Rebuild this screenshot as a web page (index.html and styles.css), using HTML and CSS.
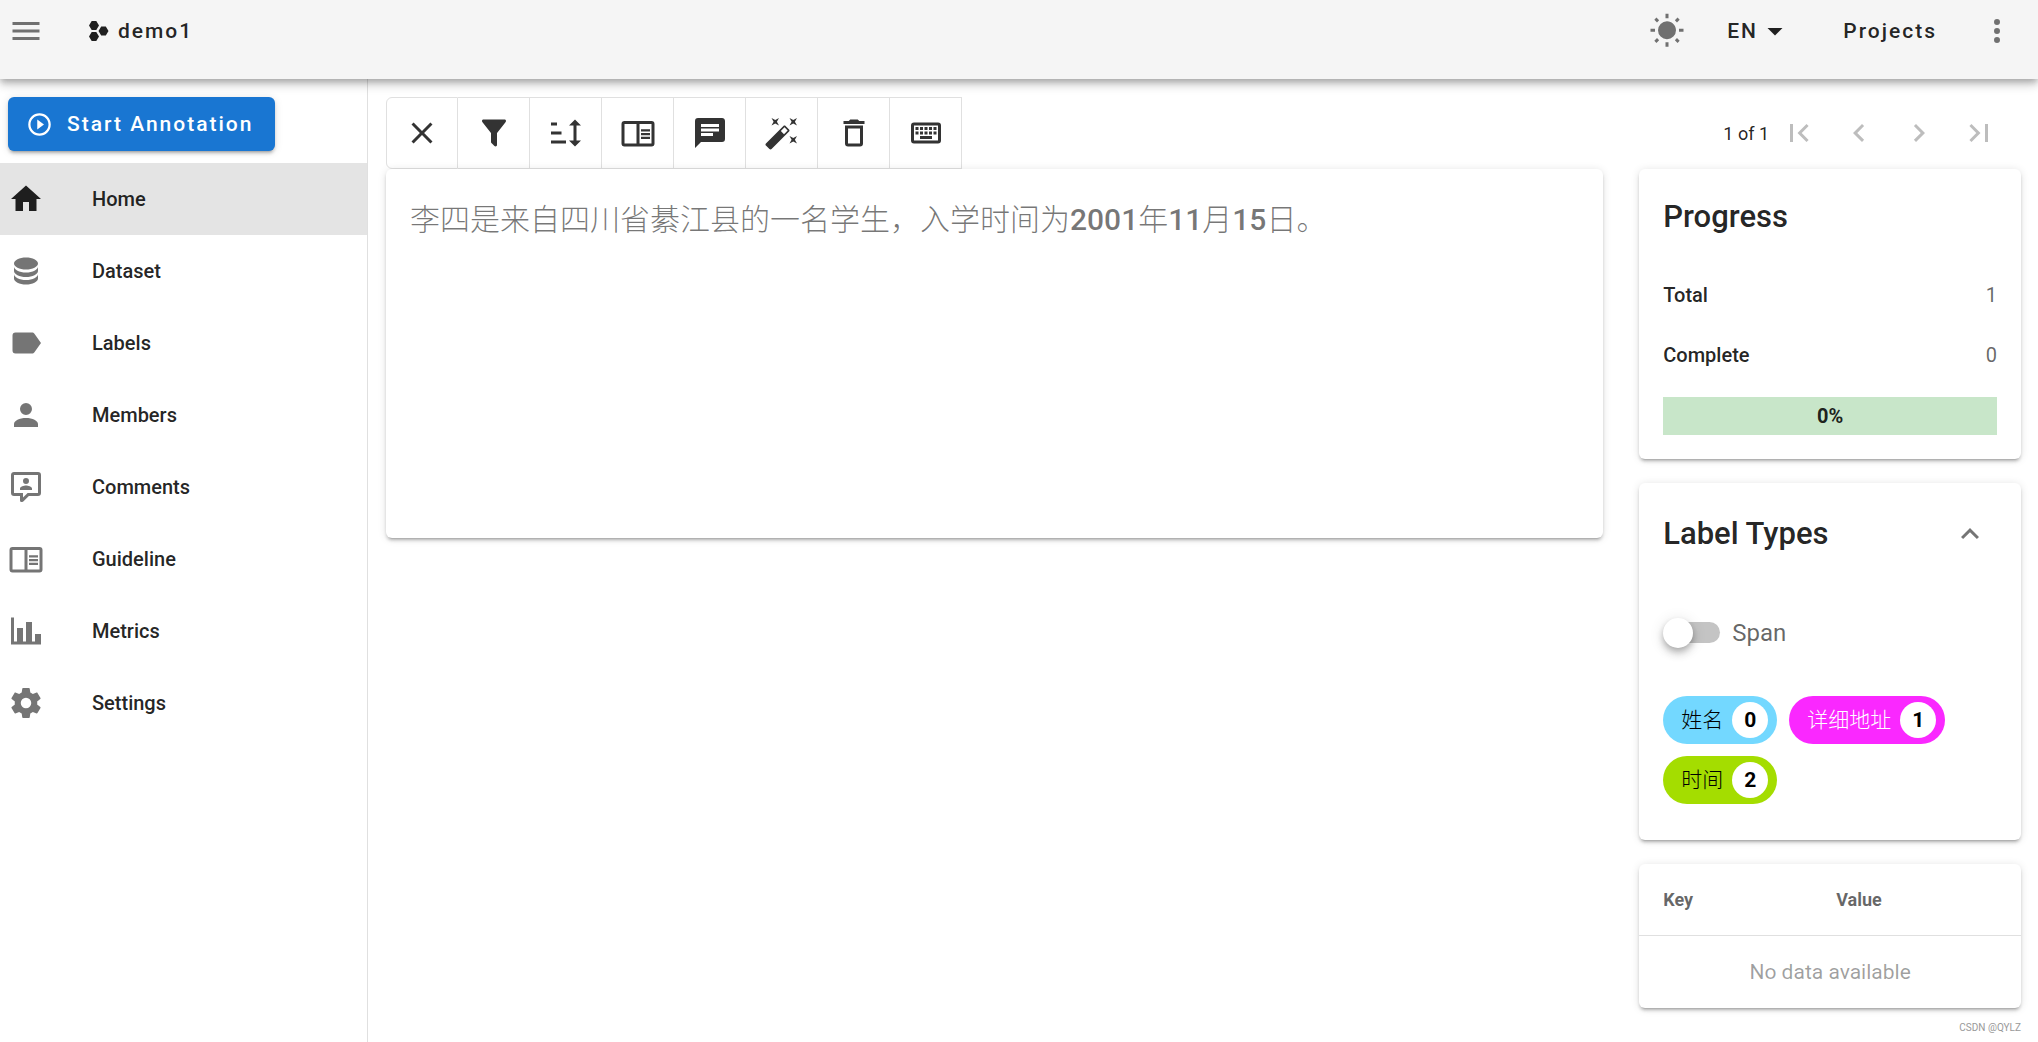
FILE: index.html
```html
<!DOCTYPE html>
<html lang="en">
<head>
    <meta charset="UTF-8">
    <meta name="viewport" content="width=device-width, initial-scale=1.0">
    <title>demo1</title>
    <link rel="stylesheet" href="styles.css">
</head>
<body>

<header class="app-bar">
    <button class="icon-btn menu-btn" aria-label="Menu">
        <svg class="icon" viewBox="0 0 24 24"><path d="M3,6H21V8H3V6M3,11H21V13H3V11M3,16H21V18H3V16Z"/></svg>
    </button>
    <a class="brand" href="#">
        <svg class="brand-icon" viewBox="0 0 20 20"><path d="M2.7,0H7.3L10,4.5L7.3,9H2.7L0,4.5Z M12.2,5.5H16.8L19.5,10L16.8,14.5H12.2L9.5,10Z M2.7,11H7.3L10,15.5L7.3,20H2.7L0,15.5Z"/></svg>
        demo1
    </a>
    <div class="spacer"></div>
    <button class="icon-btn wide" aria-label="Toggle theme">
        <svg class="icon" viewBox="0 0 24 24"><path d="M3.55,18.54L4.96,19.95L6.76,18.16L5.34,16.74M11,22.45H13V19.5H11M12,5.5A6,6 0 0,0 6,11.5A6,6 0 0,0 12,17.5A6,6 0 0,0 18,11.5C18,8.18 15.31,5.5 12,5.5M20,12.5H23V10.5H20M17.24,18.16L19.04,19.95L20.45,18.54L18.66,16.74M20.45,4.46L19.04,3.05L17.24,4.84L18.66,6.26M13,0.55H11V3.5H13M4,10.5H1V12.5H4M6.76,4.84L4.96,3.05L3.55,4.46L5.34,6.26L6.76,4.84Z"/></svg>
    </button>
    <div class="lang">
        <select class="lang-select" aria-label="Language">
            <option>EN</option>
        </select>
        <svg class="icon lang-arrow" viewBox="0 0 24 24"><path d="M7,10L12,15L17,10H7Z"/></svg>
    </div>
    <a class="bar-link" href="#">Projects</a>
    <button class="icon-btn wide" aria-label="More">
        <svg class="icon" viewBox="0 0 24 24"><path d="M12,16A2,2 0 0,1 14,18A2,2 0 0,1 12,20A2,2 0 0,1 10,18A2,2 0 0,1 12,16M12,10A2,2 0 0,1 14,12A2,2 0 0,1 12,14A2,2 0 0,1 10,12A2,2 0 0,1 12,10M12,4A2,2 0 0,1 14,6A2,2 0 0,1 12,8A2,2 0 0,1 10,6A2,2 0 0,1 12,4Z"/></svg>
    </button>
</header>

<div class="layout">
    <aside class="sidebar">
        <button class="start-btn">
            <svg class="start-icon" viewBox="0 0 24 24"><path d="M12,20C7.59,20 4,16.41 4,12C4,7.59 7.59,4 12,4C16.41,4 20,7.59 20,12C20,16.41 16.41,20 12,20M12,2A10,10 0 0,0 2,12A10,10 0 0,0 12,22A10,10 0 0,0 22,12A10,10 0 0,0 12,2M10,16.5L16,12L10,7.5V16.5Z"/></svg>
            Start Annotation
        </button>
        <nav class="nav">
            <a class="nav-item active" href="#">
                <svg class="icon" viewBox="0 0 24 24"><path d="M10,20V14H14V20H19V12H22L12,3L2,12H5V20H10Z"/></svg>
                Home
            </a>
            <a class="nav-item" href="#">
                <svg class="icon" viewBox="0 0 24 24"><path d="M12,3C7.58,3 4,4.79 4,7C4,9.21 7.58,11 12,11C16.42,11 20,9.21 20,7C20,4.79 16.42,3 12,3M4,9V12C4,14.21 7.58,16 12,16C16.42,16 20,14.21 20,12V9C20,11.21 16.42,13 12,13C7.58,13 4,11.21 4,9M4,14V17C4,19.21 7.58,21 12,21C16.42,21 20,19.21 20,17V14C20,16.21 16.42,18 12,18C7.58,18 4,16.21 4,14Z"/></svg>
                Dataset
            </a>
            <a class="nav-item" href="#">
                <svg class="icon" viewBox="0 0 24 24"><path d="M17.63,5.84C17.27,5.33 16.67,5 16,5H5A2,2 0 0,0 3,7V17A2,2 0 0,0 5,19H16C16.67,19 17.27,18.66 17.63,18.15L22,12L17.63,5.84Z"/></svg>
                Labels
            </a>
            <a class="nav-item" href="#">
                <svg class="icon" viewBox="0 0 24 24"><path d="M12,4A4,4 0 0,1 16,8A4,4 0 0,1 12,12A4,4 0 0,1 8,8A4,4 0 0,1 12,4M12,14C16.42,14 20,15.79 20,18V20H4V18C4,15.79 7.58,14 12,14Z"/></svg>
                Members
            </a>
            <a class="nav-item" href="#">
                <svg class="icon" viewBox="0 0 24 24"><path d="M9,22A1,1 0 0,1 8,21V18H4A2,2 0 0,1 2,16V4C2,2.89 2.9,2 4,2H20A2,2 0 0,1 22,4V16A2,2 0 0,1 20,18H13.9L10.2,21.71C10,21.9 9.75,22 9.5,22H9M10,16V19.08L13.08,16H20V4H4V16H10M16,14H8V13C8,11.67 10.67,11 12,11C13.33,11 16,11.67 16,13V14M12,6A2,2 0 0,1 14,8A2,2 0 0,1 12,10A2,2 0 0,1 10,8A2,2 0 0,1 12,6Z"/></svg>
                Comments
            </a>
            <a class="nav-item" href="#">
                <svg class="icon" viewBox="0 0 24 24"><path d="M21,4H3A2,2 0 0,0 1,6V19A2,2 0 0,0 3,21H21A2,2 0 0,0 23,19V6A2,2 0 0,0 21,4M3,19V6H11V19H3M21,19H13V6H21V19M14,9.5H20V11H14V9.5M14,12H20V13.5H14V12M14,14.5H20V16H14V14.5Z"/></svg>
                Guideline
            </a>
            <a class="nav-item" href="#">
                <svg class="icon" viewBox="0 0 24 24"><path d="M22,21H2V3H4V19H6V10H10V19H12V6H16V19H18V14H22V21Z"/></svg>
                Metrics
            </a>
            <a class="nav-item" href="#">
                <svg class="icon" viewBox="0 0 24 24"><path d="M12,15.5A3.5,3.5 0 0,1 8.5,12A3.5,3.5 0 0,1 12,8.5A3.5,3.5 0 0,1 15.5,12A3.5,3.5 0 0,1 12,15.5M19.43,12.97C19.47,12.65 19.5,12.33 19.5,12C19.5,11.67 19.47,11.34 19.43,11L21.54,9.37C21.73,9.22 21.78,8.95 21.66,8.73L19.66,5.27C19.54,5.05 19.27,4.96 19.05,5.05L16.56,6.05C16.04,5.66 15.5,5.32 14.87,5.07L14.5,2.42C14.46,2.18 14.25,2 14,2H10C9.75,2 9.54,2.18 9.5,2.42L9.13,5.07C8.5,5.32 7.96,5.66 7.44,6.05L4.95,5.05C4.73,4.96 4.46,5.05 4.34,5.27L2.34,8.73C2.21,8.95 2.27,9.22 2.46,9.37L4.57,11C4.53,11.34 4.5,11.67 4.5,12C4.5,12.33 4.53,12.65 4.57,12.97L2.46,14.63C2.27,14.78 2.21,15.05 2.34,15.27L4.34,18.73C4.46,18.95 4.73,19.03 4.95,18.95L7.44,17.94C7.96,18.34 8.5,18.68 9.13,18.93L9.5,21.58C9.54,21.82 9.75,22 10,22H14C14.25,22 14.46,21.82 14.5,21.58L14.87,18.93C15.5,18.67 16.04,18.34 16.56,17.94L19.05,18.95C19.27,19.03 19.54,18.95 19.66,18.73L21.66,15.27C21.78,15.05 21.73,14.78 21.54,14.63L19.43,12.97Z"/></svg>
                Settings
            </a>
        </nav>
    </aside>

    <main class="content">
        <div class="top-row">
            <div class="tools">
                <button class="tool" aria-label="Mark as done">
                    <svg class="icon" viewBox="0 0 24 24"><path d="M19,6.41L17.59,5L12,10.59L6.41,5L5,6.41L10.59,12L5,17.59L6.41,19L12,13.41L17.59,19L19,17.59L13.41,12L19,6.41Z"/></svg>
                </button>
                <button class="tool" aria-label="Filter">
                    <svg class="icon" viewBox="0 0 24 24"><path d="M14,12V19.88C14.04,20.18 13.94,20.5 13.71,20.71C13.32,21.1 12.69,21.1 12.3,20.71L10.29,18.7C10.06,18.47 9.96,18.16 10,17.87V12H9.97L4.21,4.62C3.87,4.19 3.95,3.56 4.38,3.22C4.57,3.08 4.78,3 5,3H19C19.22,3 19.43,3.08 19.62,3.22C20.05,3.56 20.13,4.19 19.79,4.62L14.03,12H14Z"/></svg>
                </button>
                <button class="tool" aria-label="Sort">
                    <svg class="icon" viewBox="0 0 24 24"><path d="M19,7H22L18,3L14,7H17V17H14L18,21L22,17H19V7M2,17H12V19H2V17M6,5V7H2V5H6M2,11H9V13H2V11Z"/></svg>
                </button>
                <button class="tool" aria-label="Guideline">
                    <svg class="icon" viewBox="0 0 24 24"><path d="M21,4H3A2,2 0 0,0 1,6V19A2,2 0 0,0 3,21H21A2,2 0 0,0 23,19V6A2,2 0 0,0 21,4M3,19V6H11V19H3M21,19H13V6H21V19M14,9.5H20V11H14V9.5M14,12H20V13.5H14V12M14,14.5H20V16H14V14.5Z"/></svg>
                </button>
                <button class="tool" aria-label="Comments">
                    <svg class="icon" viewBox="0 0 24 24"><path d="M20,2H4A2,2 0 0,0 2,4V22L6,18H20A2,2 0 0,0 22,16V4C22,2.89 21.1,2 20,2M6,9H18V11H6M14,14H6V12H14M18,8H6V6H18"/></svg>
                </button>
                <button class="tool" aria-label="Auto labeling">
                    <svg class="icon" viewBox="0 0 24 24"><path d="M7.5,5.6L5,7L6.4,4.5L5,2L7.5,3.4L10,2L8.6,4.5L10,7L7.5,5.6M19.5,15.4L22,14L20.6,16.5L22,19L19.5,17.6L17,19L18.4,16.5L17,14L19.5,15.4M22,2L20.6,4.5L22,7L19.5,5.6L17,7L18.4,4.5L17,2L19.5,3.4L22,2M13.34,12.78L15.78,10.34L13.66,8.22L11.22,10.66L13.34,12.78M14.37,7.29L16.71,9.63C17.1,10 17.1,10.65 16.71,11.04L5.04,22.71C4.65,23.1 4,23.1 3.63,22.71L1.29,20.37C0.9,20 0.9,19.35 1.29,18.96L12.96,7.29C13.35,6.9 14,6.9 14.37,7.29Z"/></svg>
                </button>
                <button class="tool" aria-label="Clear">
                    <svg class="icon" viewBox="0 0 24 24"><path d="M6,19A2,2 0 0,0 8,21H16A2,2 0 0,0 18,19V7H6V19M8,9H16V19H8V9M15.5,4L14.5,3H9.5L8.5,4H5V6H19V4H15.5Z"/></svg>
                </button>
                <button class="tool" aria-label="Keyboard shortcuts">
                    <svg class="icon" viewBox="0 0 24 24"><path d="M4,5A2,2 0 0,0 2,7V17A2,2 0 0,0 4,19H20A2,2 0 0,0 22,17V7A2,2 0 0,0 20,5H4M4,7H20V17H4V7M5,8V10H7V8H5M8,8V10H10V8H8M11,8V10H13V8H11M14,8V10H16V8H14M17,8V10H19V8H17M5,11V13H7V11H5M8,11V13H10V11H8M11,11V13H13V11H11M14,11V13H16V11H14M17,11V13H19V11H17M8,14V16H16V14H8Z"/></svg>
                </button>
            </div>
            <div class="spacer"></div>
            <div class="pager">
                <span>1 of 1</span>
                <button class="page-btn" aria-label="First" disabled>
                    <svg class="icon" viewBox="0 0 24 24"><path d="M18.41,16.59L13.82,12L18.41,7.41L17,6L11,12L17,18L18.41,16.59M6,6H8V18H6V6Z"/></svg>
                </button>
                <button class="page-btn" aria-label="Previous" disabled>
                    <svg class="icon" viewBox="0 0 24 24"><path d="M15.41,16.58L10.83,12L15.41,7.41L14,6L8,12L14,18L15.41,16.58Z"/></svg>
                </button>
                <button class="page-btn" aria-label="Next" disabled>
                    <svg class="icon" viewBox="0 0 24 24"><path d="M8.59,16.58L13.17,12L8.59,7.41L10,6L16,12L10,18L8.59,16.58Z"/></svg>
                </button>
                <button class="page-btn" aria-label="Last" disabled>
                    <svg class="icon" viewBox="0 0 24 24"><path d="M5.59,7.41L10.18,12L5.59,16.59L7,18L13,12L7,6L5.59,7.41M16,6H18V18H16V6Z"/></svg>
                </button>
            </div>
        </div>

        <div class="grid">
            <section class="card text-card">
                <p class="doc-text" lang="zh">李四是来自四川省綦江县的一名学生，入学时间为<b>2001</b>年<b>11</b>月<b>15</b>日。</p>
            </section>

            <div class="side">
                <section class="card progress-card">
                    <h2 class="card-title">Progress</h2>
                    <dl class="stats">
                        <div class="stat"><dt>Total</dt><dd>1</dd></div>
                        <div class="stat"><dt>Complete</dt><dd>0</dd></div>
                    </dl>
                    <div class="progress" role="progressbar" aria-label="Progress" aria-valuenow="0">0%</div>
                </section>

                <section class="card label-card">
                    <div class="label-head">
                        <h2 class="card-title">Label Types</h2>
                        <button class="icon-btn" aria-label="Collapse">
                            <svg class="icon" viewBox="0 0 24 24"><path d="M7.41,15.41L12,10.83L16.59,15.41L18,14L12,8L6,14L7.41,15.41Z"/></svg>
                        </button>
                    </div>
                    <div class="switch-row">
                        <input class="switch" type="checkbox" id="span-switch">
                        <label for="span-switch">Span</label>
                    </div>
                    <div class="chips">
                        <span class="chip name"><span lang="zh">姓名</span><span class="chip-key">0</span></span>
                        <span class="chip address"><span lang="zh">详细地址</span><span class="chip-key">1</span></span>
                        <span class="chip time"><span lang="zh">时间</span><span class="chip-key">2</span></span>
                    </div>
                </section>

                <section class="card">
                    <table class="meta">
                        <thead>
                            <tr><th>Key</th><th>Value</th></tr>
                        </thead>
                        <tbody>
                            <tr><td class="empty" colspan="2">No data available</td></tr>
                        </tbody>
                    </table>
                </section>
            </div>
        </div>
        <p class="watermark">CSDN @QYLZ</p>
    </main>
</div>

</body>
</html>
```
FILE: styles.css
```css
* {
    box-sizing: border-box;
}
body {
    margin: 0;
    min-height: 100vh;
    display: flex;
    flex-direction: column;
    background: #fff;
    color: rgba(0, 0, 0, 0.87);
    font-family: Roboto, "Noto Sans CJK SC", sans-serif;
    font-size: 20px;
}
a {
    color: inherit;
    text-decoration: none;
}
button {
    border: 0;
    padding: 0;
    background: none;
    color: inherit;
    font-family: inherit;
}
h2, p, dl, dd {
    margin: 0;
}
.icon {
    display: block;
    flex: none;
    width: 36px;
    height: 36px;
    fill: currentColor;
    fill-rule: evenodd;
}
.spacer {
    flex: 1;
}

/* top bar */
.app-bar {
    position: relative;
    z-index: 2;
    display: flex;
    align-items: center;
    height: 79px;
    padding: 0 5px 17px 8px;
    background: #f5f5f5;
    box-shadow: 0 3px 6px -1px rgba(0, 0, 0, 0.2), 0 6px 8px 0 rgba(0, 0, 0, 0.14), 0 2px 15px 0 rgba(0, 0, 0, 0.12);
    font-size: 21px;
    font-weight: 500;
    letter-spacing: 2px;
}
.icon-btn {
    display: flex;
    justify-content: center;
    color: rgba(0, 0, 0, 0.54);
}
.icon-btn.wide {
    width: 72px;
}
.brand {
    display: flex;
    align-items: center;
    gap: 9px;
    margin-left: 45px;
}
.brand-icon {
    width: 20px;
    height: 20px;
    fill: currentColor;
}
.lang {
    position: relative;
}
.lang-select {
    appearance: none;
    border: 0;
    width: 116px;
    height: 54px;
    padding: 0 24px;
    background: none;
    color: inherit;
    font: inherit;
    letter-spacing: inherit;
}
.lang-arrow {
    position: absolute;
    top: 9px;
    right: 26px;
    pointer-events: none;
}
.bar-link {
    padding: 0 24px;
}

/* left menu */
.layout {
    display: flex;
    flex: 1;
}
.sidebar {
    flex: none;
    width: 368px;
    padding-top: 18px;
    border-right: 1px solid #e0e0e0;
}
.start-btn {
    display: flex;
    align-items: center;
    gap: 14px;
    height: 54px;
    margin: 0 0 12px 8px;
    padding: 0 22px 0 18px;
    border-radius: 6px;
    background: #1976d2;
    box-shadow: 0 4px 2px -3px rgba(0, 0, 0, 0.2), 0 3px 3px 0 rgba(0, 0, 0, 0.14), 0 1px 8px 0 rgba(0, 0, 0, 0.12);
    color: #fff;
    font-size: 21px;
    font-weight: 500;
    letter-spacing: 2px;
}
.start-icon {
    width: 27px;
    height: 27px;
    fill: currentColor;
}
.nav-item {
    display: flex;
    align-items: center;
    gap: 48px;
    height: 72px;
    padding-left: 8px;
    font-weight: 500;
}
.nav-item .icon {
    color: rgba(0, 0, 0, 0.54);
}
.nav-item.active {
    background: #e4e4e4;
}
.nav-item.active .icon {
    color: rgba(0, 0, 0, 0.87);
}

/* page */
.content {
    flex: 1;
    min-width: 0;
    padding: 18px 17px 0 18px;
}
.top-row {
    display: flex;
    align-items: center;
}
.tools {
    display: flex;
}
.tool {
    display: flex;
    align-items: center;
    justify-content: center;
    width: 72px;
    height: 72px;
    border: 1px solid #e0e0e0;
    border-left: 0;
    color: #333;
}
.tool:first-child {
    border-left: 1px solid #e0e0e0;
    border-radius: 6px 0 0 6px;
}
.pager {
    display: flex;
    align-items: center;
    padding-right: 12px;
    font-size: 18px;
}
.page-btn {
    display: flex;
    justify-content: center;
    width: 60px;
    color: rgba(0, 0, 0, 0.26);
}
.grid {
    display: grid;
    grid-template-columns: repeat(12, 1fr);
    gap: 36px;
    align-items: start;
}
.card {
    border-radius: 6px;
    background: #fff;
    box-shadow: 0 4px 2px -3px rgba(0, 0, 0, 0.2), 0 3px 3px 0 rgba(0, 0, 0, 0.14), 0 1px 8px 0 rgba(0, 0, 0, 0.12);
}
.text-card {
    grid-column: span 9;
    min-height: 369px;
    padding: 24px;
}
.doc-text {
    color: rgba(0, 0, 0, 0.54);
    font-size: 30px;
    font-weight: 300;
    line-height: 54px;
}
.doc-text b {
    font-weight: 500;
}
.side {
    grid-column: span 3;
    display: flex;
    flex-direction: column;
    gap: 24px;
}
.card-title {
    font-size: 31px;
    font-weight: 500;
    line-height: 48px;
}
.progress-card {
    padding: 24px;
}
.stats {
    padding: 24px 0 12px;
}
.stat {
    display: flex;
    justify-content: space-between;
    line-height: 60px;
}
.stat dt {
    font-weight: 500;
}
.stat dd {
    color: rgba(0, 0, 0, 0.6);
}
.progress {
    background: #c8e6c9;
    font-weight: 700;
    line-height: 38px;
    text-align: center;
}
.label-card {
    padding: 27px 24px 36px;
}
.label-head {
    display: flex;
    align-items: center;
    justify-content: space-between;
    padding-right: 9px;
}
.switch-row {
    display: flex;
    align-items: center;
    gap: 12px;
    padding: 57px 0 45px;
    color: rgba(0, 0, 0, 0.6);
    font-size: 24px;
    line-height: 36px;
}
.switch {
    appearance: none;
    position: relative;
    width: 57px;
    height: 30px;
    margin: 0;
}
.switch::before {
    content: "";
    position: absolute;
    inset: 4px 0 5px 6px;
    border-radius: 12px;
    background: #c4c4c4;
}
.switch::after {
    content: "";
    position: absolute;
    top: 0;
    left: 0;
    width: 30px;
    height: 30px;
    border-radius: 50%;
    background: #fff;
    box-shadow: 0 3px 6px -1px rgba(0, 0, 0, 0.2), 0 6px 8px 0 rgba(0, 0, 0, 0.14), 0 2px 15px 0 rgba(0, 0, 0, 0.12);
}
.switch:checked::after {
    left: 27px;
}
.chips {
    display: flex;
    flex-wrap: wrap;
    gap: 12px;
}
.chip {
    display: flex;
    align-items: center;
    gap: 9px;
    height: 48px;
    padding: 0 9px 0 18px;
    border-radius: 24px;
    color: #000;
    font-size: 21px;
    font-weight: 300;
    line-height: 36px;
}
.chip.name {
    background: #73d8ff;
}
.chip.address {
    background: #fa28ff;
    color: #fff;
}
.chip.time {
    background: #a4dd00;
}
.chip-key {
    width: 36px;
    border-radius: 50%;
    background: #fff;
    color: #000;
    font-weight: 700;
    text-align: center;
}
.meta {
    width: 100%;
    border-collapse: separate;
    border-spacing: 0;
    table-layout: fixed;
}
.meta th {
    height: 72px;
    padding: 0 24px;
    border-bottom: 1px solid #e0e0e0;
    color: rgba(0, 0, 0, 0.6);
    font-size: 18px;
    font-weight: 700;
    text-align: left;
}
.meta th:first-child {
    width: 173px;
}
.meta .empty {
    height: 72px;
    padding: 0;
    color: rgba(0, 0, 0, 0.38);
    font-size: 21px;
    text-align: center;
}
.watermark {
    padding-top: 14px;
    color: #999;
    font-size: 10px;
    line-height: 12px;
    text-align: right;
}
```
